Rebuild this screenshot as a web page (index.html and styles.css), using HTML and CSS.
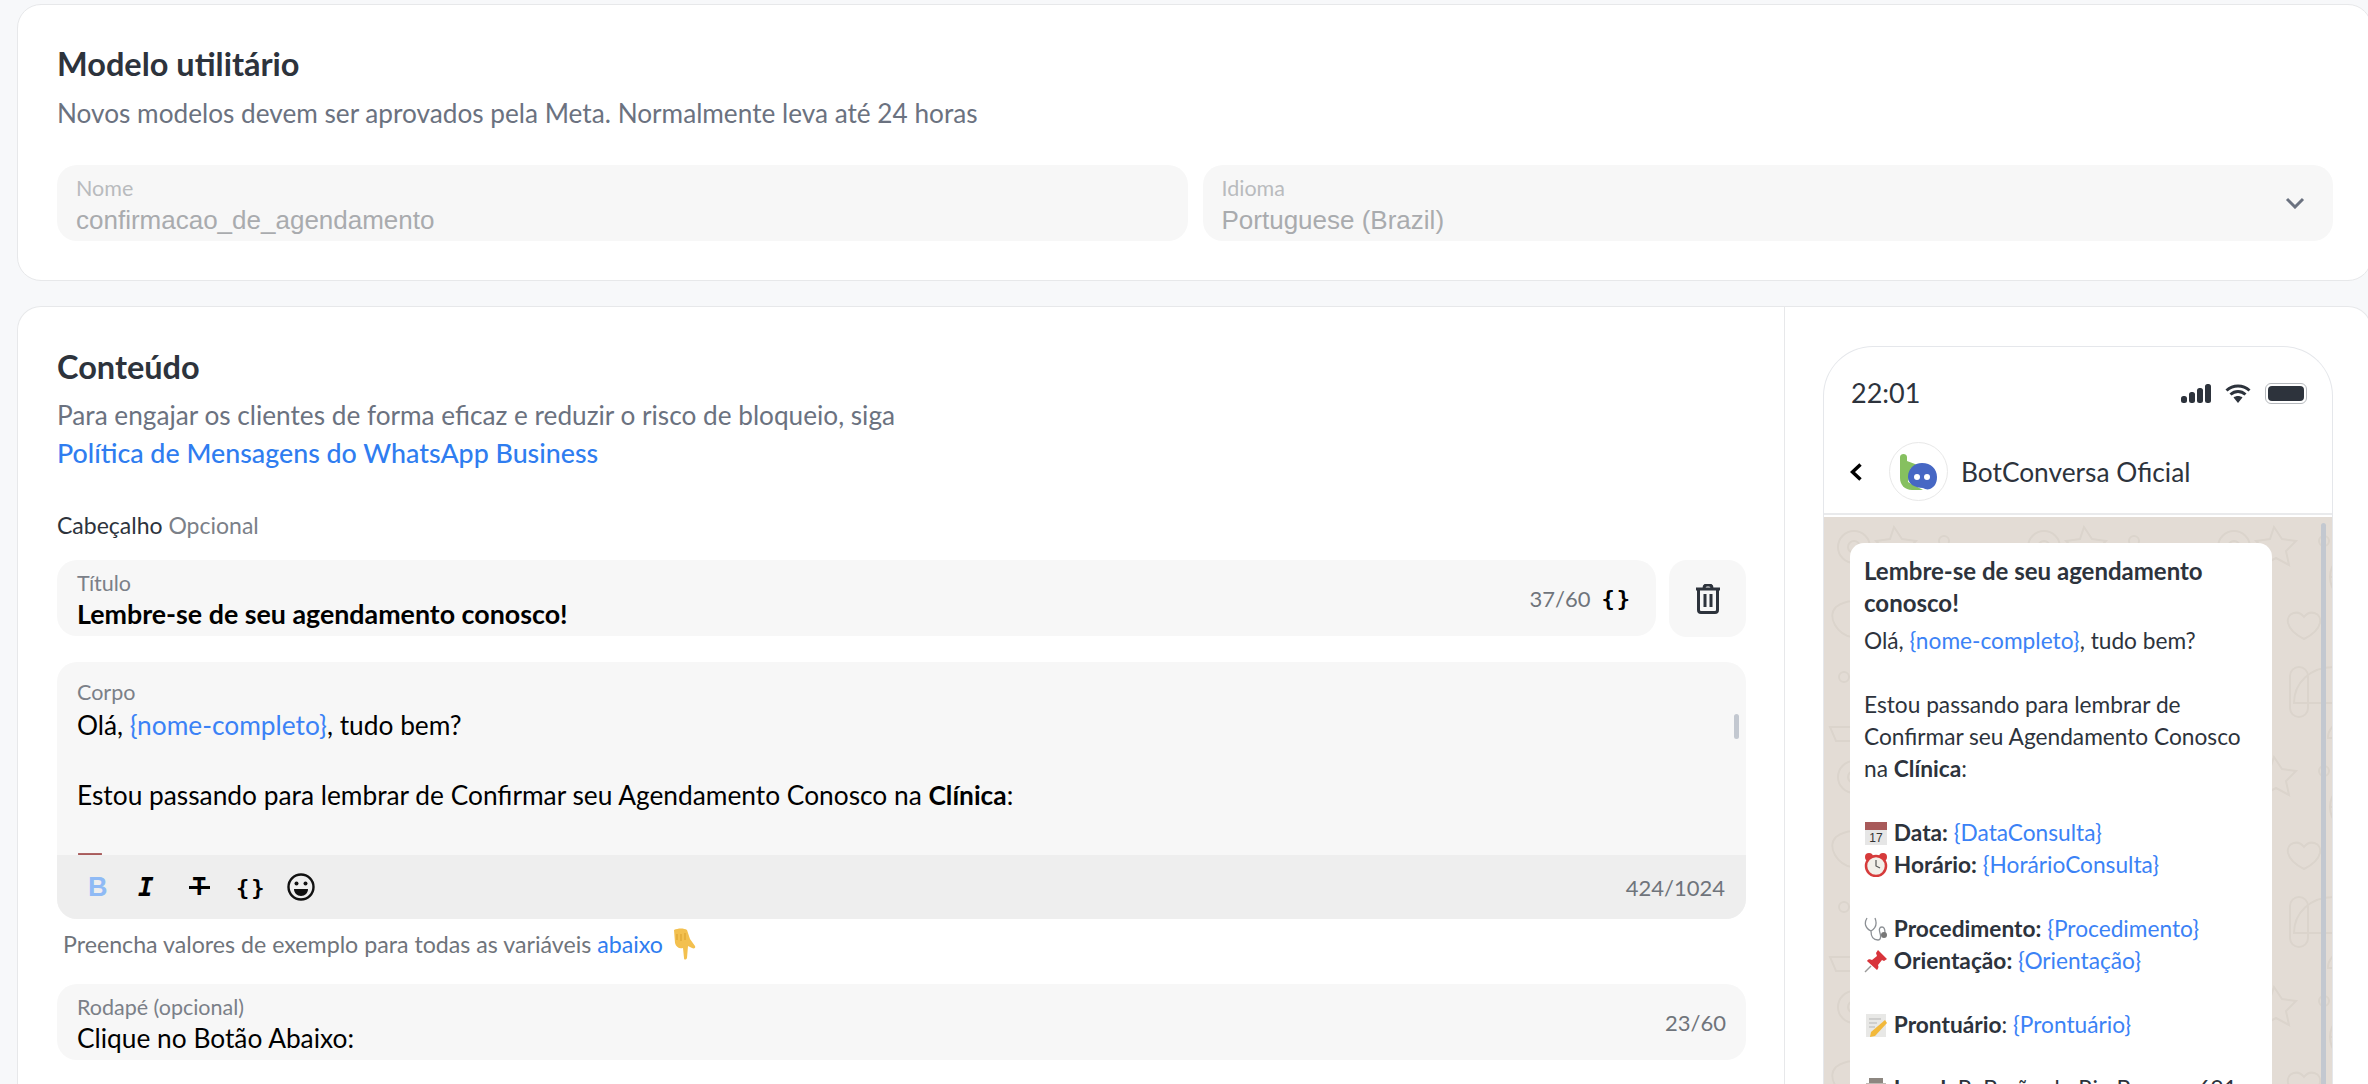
FILE: index.html
```html
<!DOCTYPE html>
<html lang="pt-BR">
<head>
  <meta charset="UTF-8" />
  <title>Modelo utilitário</title>
  <link rel="stylesheet" href="styles.css">
</head>
<body>
  <section class="card card-top">
    <h2 class="title">Modelo utilitário</h2>
    <p class="sub">Novos modelos devem ser aprovados pela Meta. Normalmente leva até 24 horas</p>
    <div class="row-two">
      <div class="field disabled">
        <div class="label">Nome</div>
        <div class="value">confirmacao_de_agendamento</div>
      </div>
      <div class="field disabled select">
        <div class="field-text">
          <div class="label">Idioma</div>
          <div class="value">Portuguese (Brazil)</div>
        </div>
        <svg class="chevron" viewBox="0 0 20 12"><path d="M2 2l8 8 8-8" /></svg>
      </div>
    </div>
  </section>

  <section class="card card-main">
    <div class="editor">
      <h2 class="title">Conteúdo</h2>
      <p class="sub sub-main">Para engajar os clientes de forma eficaz e reduzir o risco de bloqueio, siga</p>
      <a class="policy">Política de Mensagens do WhatsApp Business</a>
      <div class="head-label">Cabeçalho <span>Opcional</span></div>

      <div class="title-row">
        <div class="field grow split">
          <div class="field-text">
            <div class="label">Título</div>
            <div class="value bold">Lembre-se de seu agendamento conosco!</div>
          </div>
          <div class="count-wrap">
            <span class="count">37/60</span>
            <span class="braces">{}</span>
          </div>
        </div>
        <div class="trash">
          <svg viewBox="0 0 26 30" width="26" height="30">
            <path class="trash-line" d="M1 5h24M9 4c0-2 1-3 3-3h2c2 0 3 1 3 3M3.500 5v21c0 1.500 1 2.500 2.500 2.500h14c1.500 0 2.500-1 2.500-2.500V5M10 10v13M16 10v13" />
          </svg>
        </div>
      </div>

      <div class="body-box">
        <div class="body-text">
          <div class="label">Corpo</div>
          <div class="body-lines">
            <div>Olá, <span class="var">{nome-completo}</span>, tudo bem?</div>
            <div class="blank"></div>
            <div>Estou passando para lembrar de Confirmar seu Agendamento Conosco na <b>Clínica</b>:</div>
            <div class="blank"></div>
            <div class="emoji-line">
              <svg class="emoji-big" viewBox="0 0 24 24"><use href="#e-cal" /></svg>
            </div>
          </div>
          <div class="scroll-thumb"></div>
        </div>
        <div class="toolbar">
          <div class="tools">
            <span class="tool tool-b">B</span>
            <span class="tool tool-i">I</span>
            <span class="tool tool-s">T</span>
            <span class="braces tool-c">{}</span>
            <svg class="smile" viewBox="0 0 28 28">
              <circle cx="14" cy="14" r="12.500" fill="none" stroke="#111" stroke-width="2.400" />
              <circle cx="9.500" cy="10.500" r="2" fill="#111" />
              <circle cx="18.500" cy="10.500" r="2" fill="#111" />
              <path d="M7 16h14c0 4-3 7-7 7s-7-3-7-7z" fill="#111" />
            </svg>
          </div>
          <span class="count">424/1024</span>
        </div>
      </div>

      <div class="hint">
        Preencha valores de exemplo para todas as variáveis <a>abaixo</a>
        <svg class="hand" viewBox="0 0 26 32">
          <path d="M3 2c4-2 10-2 13 0l3 9 5 7c1 2-1 3-3 2l-4-2-1 12c-1 2-3 2-3 0l-1-10c-4 1-7-1-8-5z" fill="#f3c04f" />
          <path d="M6 6v6M10 6v7M14 5v7" stroke="#d99f2e" stroke-width="1" />
        </svg>
      </div>

      <div class="field split footer-field">
        <div class="field-text">
          <div class="label">Rodapé (opcional)</div>
          <div class="value">Clique no Botão Abaixo:</div>
        </div>
        <span class="count">23/60</span>
      </div>
    </div>

    <aside class="preview">
      <div class="phone">
        <div class="status">
          <span>22:01</span>
          <div class="status-icons">
            <svg width="30" height="19" viewBox="0 0 30 19">
              <rect x="0" y="12" width="6" height="7" rx="2.500" />
              <rect x="8" y="8" width="6" height="11" rx="2.500" />
              <rect x="16" y="4" width="6" height="15" rx="2.500" />
              <rect x="24" y="0" width="6" height="19" rx="2.500" />
            </svg>
            <svg width="26" height="19" viewBox="0 0 26 19">
              <path d="M1.500 6.500C8 .5 18 .5 24.500 6.500M5.500 10.500c4.500-4 10.500-4 15 0" fill="none" stroke="#2d333c" stroke-width="3" />
              <path d="M8.500 13.500c2.500-2 6.500-2 9 0L13 19z" />
            </svg>
            <div class="battery"><div></div></div>
          </div>
        </div>
        <div class="wa-head">
          <svg class="back" width="12" height="18" viewBox="0 0 12 18"><path d="M10.500 1.500L2.500 9l8 7.500" /></svg>
          <div class="avatar">
            <svg width="40" height="40" viewBox="0 0 40 40">
              <path d="M1 5c0-4 7-4 7 0v4l8 3c3 1 2 4 0 4H12L9 30l15 8H13C6 38 1 33 1 26z" fill="#86c060" />
              <path d="M23 11c9 0 15 6 15 14 0 7-3 10-7 12-3 1-5 0-7-1-8 0-15-4-15-11 0-8 6-14 14-14z" fill="#4667c4" />
              <circle cx="18" cy="25" r="3" fill="#fff" />
              <circle cx="28" cy="25" r="3" fill="#fff" />
            </svg>
          </div>
          <span class="wa-name">BotConversa Oficial</span>
        </div>
        <div class="chat">
          <svg class="wall" width="100%" height="100%">
            <defs>
              <pattern id="doodles" width="190" height="230" patternUnits="userSpaceOnUse">
                <g fill="none" stroke="#dbd4cc" stroke-width="2">
                  <circle cx="30" cy="30" r="16" />
                  <circle cx="30" cy="30" r="6" />
                  <path d="M70 10l8 12 14 2-10 10 3 14-13-7-13 7 3-14-10-10 14-2z" />
                  <circle cx="120" cy="24" r="5" />
                  <circle cx="150" cy="60" r="24" />
                  <path d="M150 36v48M126 60h48M133 43l34 34M167 43l-34 34" />
                  <path d="M12 90c14-10 30-6 36 6s-6 26-20 24-26-20-16-30z" />
                  <path d="M100 100c6-8 18-4 16 6-2 8-12 14-16 16-4-2-14-8-16-16-2-10 10-14 16-6z" />
                  <circle cx="20" cy="160" r="5" />
                  <circle cx="52" cy="176" r="8" />
                  <rect x="86" y="150" width="18" height="50" rx="9" />
                  <path d="M130 150c24 0 40 16 40 36h-80c0-20 16-36 40-36zM140 205c14 0 20 8 20 16h-36c0-8 6-16 16-16z" />
                  <path d="M6 210h40l-6 14H12z" />
                </g>
              </pattern>
            </defs>
            <rect width="100%" height="100%" fill="url(#doodles)" />
          </svg>
          <div class="chat-scroll"></div>
          <div class="bubble">
            <div class="bubble-title">Lembre-se de seu agendamento conosco!</div>
            <div class="bubble-body">
              <div>Olá, <span class="var">{nome-completo}</span>, tudo bem?</div>
              <div class="gap"></div>
              <div>Estou passando para lembrar de Confirmar seu Agendamento Conosco na <b>Clínica</b>:</div>
              <div class="gap"></div>
              <div><svg class="emoji" viewBox="0 0 24 24"><use href="#e-cal" /></svg> <b>Data:</b> <span class="var">{DataConsulta}</span></div>
              <div><svg class="emoji" viewBox="0 0 24 24"><use href="#e-clock" /></svg> <b>Horário:</b> <span class="var">{HorárioConsulta}</span></div>
              <div class="gap"></div>
              <div><svg class="emoji" viewBox="0 0 24 24"><use href="#e-steth" /></svg> <b>Procedimento:</b> <span class="var">{Procedimento}</span></div>
              <div><svg class="emoji" viewBox="0 0 24 24"><use href="#e-pin" /></svg> <b>Orientação:</b> <span class="var">{Orientação}</span></div>
              <div class="gap"></div>
              <div><svg class="emoji" viewBox="0 0 24 24"><use href="#e-memo" /></svg> <b>Prontuário</b>: <span class="var">{Prontuário}</span></div>
              <div class="gap"></div>
              <div><svg class="emoji" viewBox="0 0 24 24"><use href="#e-hosp" /></svg> <b>Local:</b> R. Barão do Rio Branco, 691</div>
            </div>
          </div>
        </div>
      </div>
    </aside>
  </section>

  <svg class="sprites" width="0" height="0">
    <symbol id="e-cal" viewBox="0 0 24 24">
      <rect x="1" y="1" width="22" height="23" fill="#e6e6e6" />
      <rect x="1" y="1" width="22" height="8" fill="#a85a5a" />
      <text x="12" y="21" font-size="12" text-anchor="middle" font-family="Liberation Sans" fill="#333">17</text>
    </symbol>
    <symbol id="e-clock" viewBox="0 0 24 24">
      <circle cx="5" cy="4" r="4" fill="#d63b3b" />
      <circle cx="19" cy="4" r="4" fill="#d63b3b" />
      <circle cx="12" cy="13" r="10" fill="#f2efe9" stroke="#d63b3b" stroke-width="2.500" />
      <path d="M12 7v6l4 2" stroke="#555" stroke-width="1.200" fill="none" />
    </symbol>
    <symbol id="e-steth" viewBox="0 0 24 24">
      <path d="M3 1C0 6 1 11 7 14c5-3 6-8 4-13M7 14c0 6 2 9 7 9 3 0 3-4 2-7s-1-6 2-6c3 0 3 4 3 6" fill="none" stroke="#8b8f94" stroke-width="1.300" />
      <circle cx="20" cy="18" r="3" fill="#777" />
    </symbol>
    <symbol id="e-pin" viewBox="0 0 24 24">
      <path d="M14 1l9 9-3 2-2-1-4 5c1 2 0 4-1 5L3 12c1-2 3-2 5-1l5-4-1-3z" fill="#d8343b" />
      <path d="M7 17l-6 6" stroke="#9a9a9a" stroke-width="1.500" />
    </symbol>
    <symbol id="e-memo" viewBox="0 0 24 24">
      <rect x="2" y="1" width="20" height="23" fill="#e8e8e6" />
      <path d="M5 6h12M5 10h8M5 14h6" stroke="#b5b5b5" stroke-width="1" />
      <path d="M21 7l2 3-12 13-5 1 1-5z" fill="#f2b93b" />
    </symbol>
    <symbol id="e-hosp" viewBox="0 0 24 24">
      <rect x="2" y="6" width="20" height="18" fill="#bfb9b3" />
      <rect x="5" y="1" width="14" height="5" fill="#8d8781" />
      <path d="M12 8v8M8 12h8" stroke="#d8343b" stroke-width="3" />
    </symbol>
  </svg>
</body>
</html>
```

FILE: styles.css
```css
* {
  box-sizing: border-box;
}
html, body {
  margin: 0;
  height: 1084px;
  overflow: hidden;
}
body {
  padding: 4px 0 0 17px;
  background-color: #f7f8fa;
  font-family: "Lato", "Noto Sans", sans-serif;
  color: #2d333c;
}
b {
  font-weight: 700;
}
.sprites {
  position: absolute;
}
.card {
  margin-right: -4px;
  background-color: #fff;
  border: 1px solid #e7e8ea;
  border-radius: 24px;
}
.card-top {
  height: 277px;
  padding: 39px 38px 0 39px;
}
.card-main {
  height: 800px;
  margin-top: 25px;
  display: flex;
  border-bottom: none;
  border-bottom-left-radius: 0;
  border-bottom-right-radius: 0;
}
.title {
  margin: 0;
  font-size: 32.500px;
  line-height: 40px;
  font-weight: 700;
}
.sub {
  margin: 11px 0 0;
  font-size: 26.200px;
  line-height: 36px;
  color: #6b7280;
}
.sub-main {
  margin-top: 9px;
  line-height: 38px;
}
.policy {
  display: block;
  font-size: 26.800px;
  line-height: 38px;
  font-weight: 500;
  color: #2f7df0;
}
.row-two {
  display: flex;
  gap: 15px;
  margin-top: 34px;
}
.row-two .field {
  flex: 1 1 0;
  padding-left: 19px;
}
.field {
  height: 76px;
  padding: 11px 20px 0;
  background-color: #f7f7f7;
  border-radius: 20px;
}
.grow {
  flex: 1;
}
.split, .select {
  display: flex;
  justify-content: space-between;
  align-items: center;
  padding-top: 0;
}
.field-text {
  align-self: flex-start;
  padding-top: 11px;
}
.label {
  font-size: 21.500px;
  line-height: 24px;
  color: #7b8088;
}
.value {
  font-size: 26.300px;
  line-height: 38px;
  color: #000;
}
.value.bold {
  font-size: 26.800px;
  font-weight: 700;
}
.disabled .label {
  color: #b9bbbe;
}
.disabled .value {
  font-family: "Liberation Sans", sans-serif;
  font-size: 26px;
  line-height: 40px;
  color: #a9abae;
}
.chevron {
  width: 20px;
  height: 12px;
  margin-right: 8px;
  fill: none;
  stroke: #6b7280;
  stroke-width: 3;
}
.editor {
  width: 1767px;
  padding: 40px 38px 0 39px;
  border-right: 1px solid #e7e8ea;
}
.head-label {
  margin-top: 38px;
  font-size: 23px;
  line-height: 30px;
}
.head-label span {
  color: #7b8088;
}
.title-row {
  display: flex;
  gap: 13px;
  margin-top: 20px;
}
.count-wrap {
  display: flex;
  align-items: center;
  gap: 11px;
  margin-right: 4px;
}
.count {
  font-size: 22px;
  color: #6f747b;
}
.braces {
  font-family: "DejaVu Sans Mono", monospace;
  font-weight: 700;
  font-size: 22px;
  letter-spacing: 2px;
  color: #000;
}
.trash {
  width: 77px;
  height: 77px;
  display: flex;
  align-items: center;
  justify-content: center;
  background-color: #f7f7f7;
  border-radius: 18px;
}
.trash-line {
  fill: none;
  stroke: #2d333c;
  stroke-width: 3;
}
.body-box {
  height: 257px;
  margin-top: 25px;
  background-color: #f7f7f7;
  border-radius: 20px;
  overflow: hidden;
}
.body-text {
  position: relative;
  height: 193px;
  padding: 18px 20px 0;
  overflow: hidden;
}
.body-lines {
  margin-top: 4px;
  font-size: 26.300px;
  line-height: 35px;
  color: #000;
}
.blank {
  height: 35px;
}
.emoji-line {
  height: 35px;
}
.emoji-big {
  display: block;
  width: 26px;
  height: 26px;
  margin-top: 4px;
}
.var {
  color: #3b82f6;
}
.scroll-thumb {
  position: absolute;
  top: 52px;
  right: 7px;
  width: 5px;
  height: 25px;
  background-color: #c3c8d0;
  border-radius: 3px;
}
.toolbar {
  height: 64px;
  padding: 0 21px 0 31px;
  display: flex;
  align-items: center;
  justify-content: space-between;
  background-color: #eeeeee;
}
.tools {
  display: flex;
  align-items: center;
}
.tool {
  display: block;
  font-weight: 700;
  font-size: 27px;
  line-height: 32px;
  color: #000;
}
.tool-b {
  width: 50px;
  font-family: "Liberation Sans", sans-serif;
  color: #8fbaf5;
}
.tool-i {
  width: 51px;
  font-family: "DejaVu Sans Mono", monospace;
  font-style: italic;
  font-size: 26px;
}
.tool-s {
  position: relative;
  width: 47px;
  padding-left: 3px;
  font-family: "DejaVu Sans Mono", monospace;
  font-size: 24px;
}
.tool-s::after {
  content: "";
  position: absolute;
  top: 15px;
  left: 0;
  width: 21px;
  height: 3px;
  background-color: #000;
}
.tool-c {
  width: 51px;
}
.smile {
  width: 28px;
  height: 28px;
}
.hint {
  height: 30px;
  margin: 9px 0 0 6px;
  font-size: 23.200px;
  line-height: 30px;
  color: #6f747b;
}
.hint a {
  color: #2f7df0;
}
.hand {
  width: 26px;
  height: 32px;
  margin-left: 2px;
  vertical-align: -7px;
}
.footer-field {
  margin-top: 26px;
}
.preview {
  flex: 1;
  padding: 39px 38px 0 38px;
}
.phone {
  height: 760px;
  border: 1px solid #e5e7eb;
  border-bottom: none;
  border-radius: 50px 50px 0 0;
  overflow: hidden;
  display: flex;
  flex-direction: column;
}
.status {
  display: flex;
  align-items: center;
  justify-content: space-between;
  margin-top: 28px;
  padding: 0 25px 0 27px;
  font-size: 27px;
  line-height: 36px;
}
.status-icons {
  display: flex;
  align-items: center;
  gap: 14px;
  fill: #2d333c;
}
.battery {
  width: 42px;
  height: 21px;
  padding: 2px;
  border: 1px solid #b6b9bd;
  border-radius: 6px;
}
.battery div {
  height: 100%;
  background-color: #2d333c;
  border-radius: 4px;
}
.wa-head {
  display: flex;
  align-items: center;
  margin-top: 31px;
  padding: 0 0 12px 26px;
  border-bottom: 2px solid #e9eaec;
}
.back {
  fill: none;
  stroke: #000;
  stroke-width: 3.500;
}
.avatar {
  width: 59px;
  height: 59px;
  margin-left: 27px;
  display: flex;
  align-items: center;
  justify-content: center;
  border: 1px solid #e8e8e8;
  border-radius: 50%;
}
.wa-name {
  margin-left: 13px;
  font-size: 26.300px;
}
.chat {
  position: relative;
  flex: 1;
  margin-top: 2px;
  padding: 26px 0 0 26px;
  background-color: #e3dcd5;
}
.wall {
  position: absolute;
  top: 0;
  left: 0;
}
.chat-scroll {
  position: absolute;
  top: 6px;
  right: 6px;
  bottom: 0;
  width: 5px;
  background-color: #c3c8d0;
  border-radius: 3px;
}
.bubble {
  position: relative;
  width: 422px;
  height: 560px;
  padding: 12px 14px 0;
  background-color: #fff;
  border-radius: 14px;
}
.bubble-title {
  font-size: 24px;
  line-height: 32px;
  font-weight: 700;
}
.bubble-body {
  margin-top: 6px;
  font-size: 22.700px;
  line-height: 32px;
}
.gap {
  height: 32px;
}
.emoji {
  width: 24px;
  height: 24px;
  vertical-align: -4px;
}
```
